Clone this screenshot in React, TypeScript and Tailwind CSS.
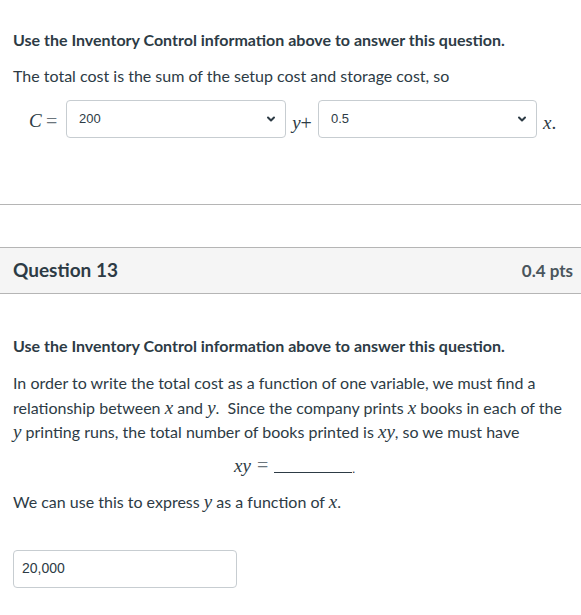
import { ChevronDown } from "lucide-react";

const font = "font-['Lato',_'Noto_Sans',_sans-serif]";
const math = "font-['Liberation_Serif',_'DejaVu_Serif',_serif] italic";

function M({ children }: { children: React.ReactNode }) {
  return <span className={`${math} text-[19px] leading-none`}>{children}</span>;
}

function Select({ value, width }: { value: string; width: string }) {
  return (
    <div className={`relative flex h-[38px] ${width} shrink-0 items-center rounded border border-[#c7cdd1] bg-white pl-3 pr-2`}>
      <span className="font-['Liberation_Sans',_Arial,_sans-serif] text-[13px] text-[#2d3b45]">{value}</span>
      <ChevronDown className="ml-auto h-3 w-3 text-[#2d3b45]" strokeWidth={4} />
    </div>
  );
}

export default function App() {
  return (
    <div className={`${font} w-[581px] bg-white text-[#2d3b45]`}>
      {/* Previous question body */}
      <div className="px-[13px] pt-[30px]">
        <p className="text-[16px] font-bold leading-5">Use the Inventory Control information above to answer this question.</p>
        <p className="mt-4 text-[16px] leading-5">The total cost is the sum of the setup cost and storage cost, so</p>
        <div className="mt-[14px] flex items-center pl-[16px]">
          <span className={`${math} mt-1 w-[14px] text-[19px]`}>C</span>
          <span className="ml-[3px] mr-[5px] mt-1 w-[15px] font-['Liberation_Serif',_serif] text-[20px] text-[#6b757c]">=</span>
          <Select value="200" width="w-[220px]" />
          <span className="flex w-[32px] shrink-0 justify-center pt-2">
            <M>y</M>
            <span className="font-['Liberation_Serif',_serif] text-[20px] leading-none">+</span>
          </span>
          <Select value="0.5" width="w-[219px]" />
          <span className="ml-[6px] mt-2">
            <M>x</M>
            <span className="font-['Liberation_Serif',_serif] text-[19px]">.</span>
          </span>
        </div>
      </div>

      <div className="mt-[66px] border-t border-[#b5b5b5]" />

      {/* Question 13 header */}
      <div className="mt-[42px] flex h-[47px] items-center justify-between border-y border-[#b5b5b5] bg-[#f5f5f5] pl-[13px] pr-[8px]">
        <h2 className="text-[19px] font-bold">Question 13</h2>
        <span className="text-[17px] font-bold text-[#4a555d]">0.4 pts</span>
      </div>

      <div className="px-[13px] pt-[42px]">
        <p className="text-[16px] font-bold leading-5">Use the Inventory Control information above to answer this question.</p>
        <p className="mt-[15px] text-[16px] leading-[24.5px]">
          In order to write the total cost as a function of one variable, we must find a relationship between <M>x</M>{" "}
          and <M>y</M>.&nbsp; Since the company prints <M>x</M> books in each of the <M>y</M> printing runs, the total
          number of books printed is <M>xy</M>, so we must have
        </p>
        <div className="mt-[10px] flex items-end justify-center pl-[8px]">
          <M>xy</M>
          <span className="ml-[6px] font-['Liberation_Serif',_serif] text-[20px] leading-none text-[#6b757c]">=</span>
          <span className="ml-[6px] mb-[2px] inline-block w-[78px] border-b border-[#2d3b45]" />
          <span className="text-[12px] leading-none">.</span>
        </div>
        <p className="mt-[17px] text-[16px] leading-5">
          We can use this to express <M>y</M> as a function of <M>x</M>.
        </p>
        <div className="mt-[38px] flex h-[38px] w-[224px] items-center rounded border border-[#c7cdd1] px-2">
          <span className="font-['Liberation_Sans',_Arial,_sans-serif] text-[14px]">20,000</span>
        </div>
        <div className="h-[27px]" />
      </div>
    </div>
  );
}
